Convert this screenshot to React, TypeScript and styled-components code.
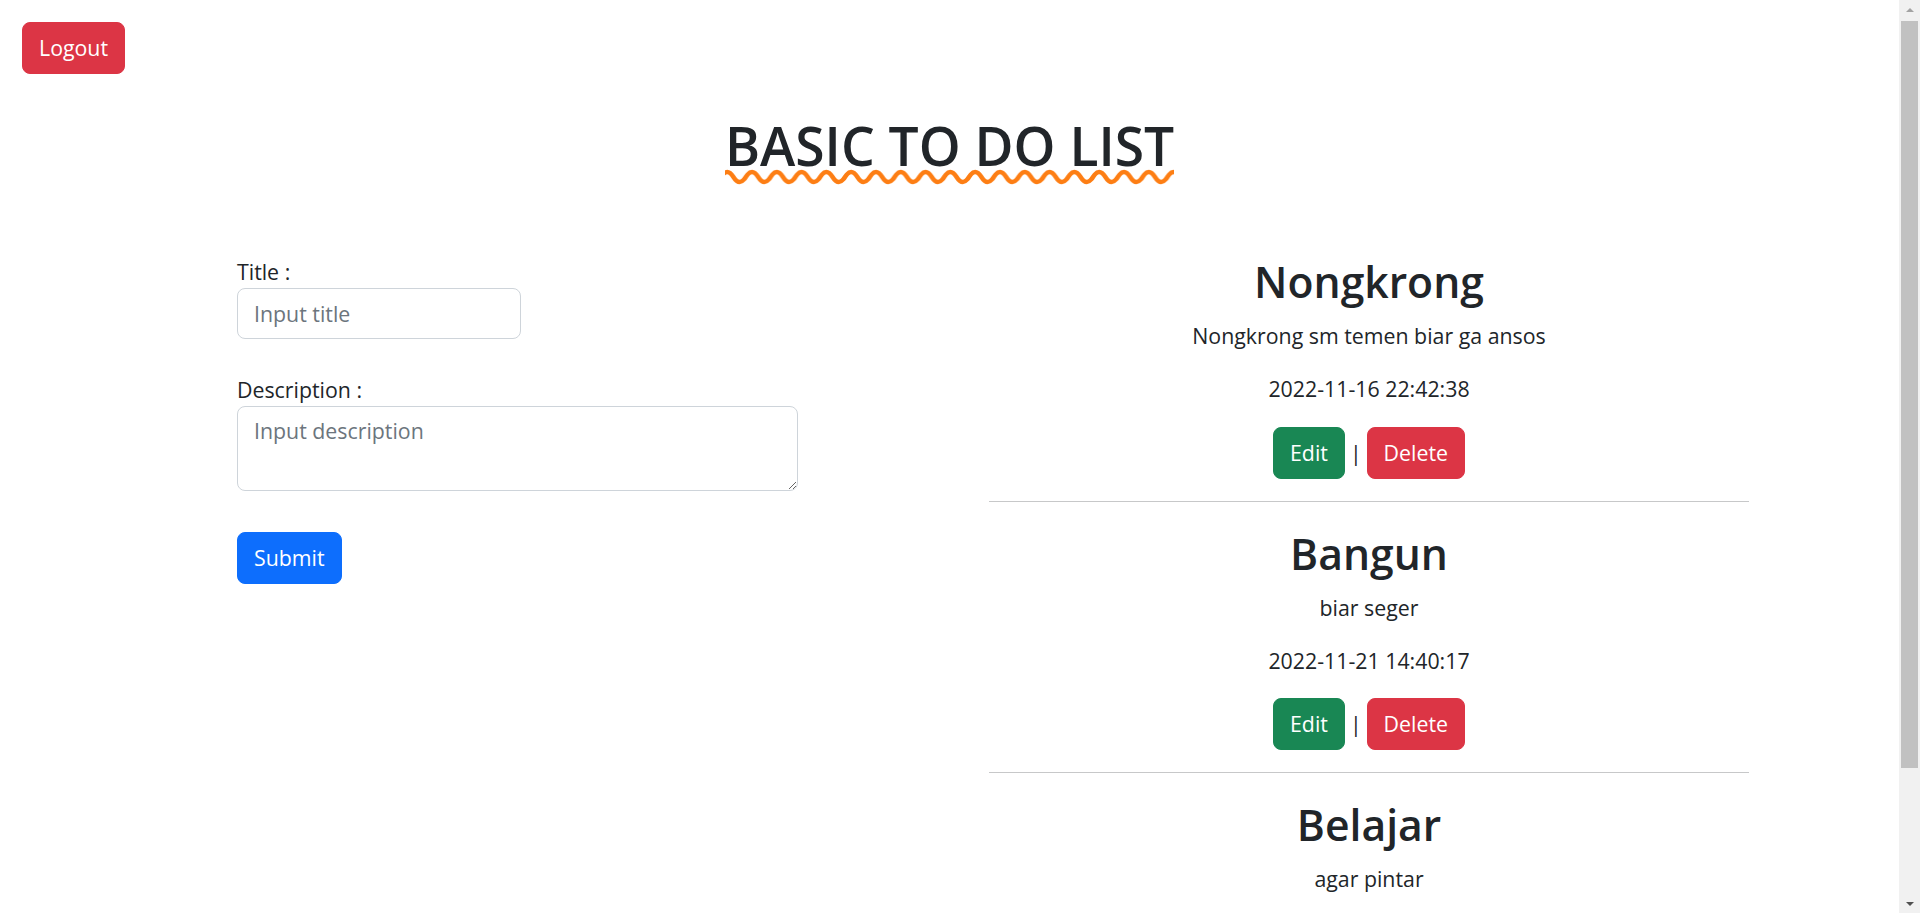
import styled, { createGlobalStyle } from 'styled-components';

interface Todo {
	title: string;
	description: string;
	createdAt: string;
}

const todos: Todo[] = [
	{ title: 'Nongkrong', description: 'Nongkrong sm temen biar ga ansos', createdAt: '2022-11-16 22:42:38' },
	{ title: 'Bangun', description: 'biar seger', createdAt: '2022-11-21 14:40:17' },
	{ title: 'Belajar', description: 'agar pintar', createdAt: '2022-11-22 09:12:05' },
];

const GlobalStyle = createGlobalStyle`
	* {
		box-sizing: border-box;
	}

	body {
		margin: 0;
		font-family: "Open Sans", "Noto Sans", sans-serif;
		font-size: 21.33px;
		line-height: 1.5;
		color: #212529;
		background: #fff;
		overflow: hidden;
	}
`;

// wave under the page title, one period per tile
const WAVE = 24.8;

function WaveLine() {
	return (
		<WaveSvg height="16" aria-hidden="true">
			<defs>
				<pattern id="wave" width={WAVE} height="16" patternUnits="userSpaceOnUse" x="-4">
					<path
						d={`M${-WAVE / 2} 8 Q${-WAVE / 4} 18 0 8 Q${WAVE / 4} -2 ${WAVE / 2} 8 Q${(WAVE * 3) / 4} 18 ${WAVE} 8 Q${(WAVE * 5) / 4} -2 ${(WAVE * 3) / 2} 8`}
						fill="none"
						stroke="#fd7e14"
						strokeWidth="4.5"
					/>
				</pattern>
			</defs>
			<rect width="100%" height="16" fill="url(#wave)" />
		</WaveSvg>
	);
}

export default function App() {
	return (
		<Page>
			<GlobalStyle />
			<Main>
				<TopBar>
					<Button variant="danger">Logout</Button>
				</TopBar>
				<Heading>
					<TitleWrap>
						<TitleText>BASIC TO DO LIST</TitleText>
						<WaveLine />
					</TitleWrap>
				</Heading>
				<Content>
					<Form onSubmit={(e) => e.preventDefault()}>
						<Label htmlFor="title">Title :</Label>
						<TitleInput id="title" placeholder="Input title" />
						<Label htmlFor="description" spaced>
							Description :
						</Label>
						<TextArea id="description" rows={2} placeholder="Input description" />
						<SubmitRow>
							<Button variant="primary" type="submit">
								Submit
							</Button>
						</SubmitRow>
					</Form>
					<List>
						{todos.map((todo) => (
							<Item key={todo.title}>
								<ItemTitle>{todo.title}</ItemTitle>
								<ItemText>{todo.description}</ItemText>
								<ItemText>{todo.createdAt}</ItemText>
								<Actions>
									<Button variant="success">Edit</Button>
									<Divider>|</Divider>
									<Button variant="danger">Delete</Button>
								</Actions>
								<Rule />
							</Item>
						))}
					</List>
				</Content>
			</Main>
			<Scrollbar aria-hidden="true">
				<ScrollArrow dir="up" />
				<ScrollTrack>
					<ScrollThumb />
				</ScrollTrack>
				<ScrollArrow dir="down" />
			</Scrollbar>
		</Page>
	);
}

const colors = {
	danger: '#dc3545',
	success: '#198754',
	primary: '#0d6efd',
};

const Page = styled.div`
	display: flex;
	height: 100vh;
	overflow: hidden;
`;

const Main = styled.div`
	flex: 1;
	min-width: 0;
	overflow: hidden;
`;

const Scrollbar = styled.div`
	display: flex;
	flex-direction: column;
	flex: none;
	width: 21px;
	background: #f1f1f1;
`;

const ScrollArrow = styled.div<{ dir: 'up' | 'down' }>`
	flex: none;
	height: 21px;
	display: flex;
	align-items: center;
	justify-content: center;

	&::before {
		content: '';
		border-left: 4px solid transparent;
		border-right: 4px solid transparent;
		${(p) =>
			p.dir === 'up'
				? 'border-bottom: 4px solid #a3a3a3; margin-top: -1px;'
				: 'border-top: 4px solid #505050; margin-top: 3px;'}
	}
`;

const ScrollTrack = styled.div`
	flex: 1;
	padding: 0 2px 0 2px;
`;

const ScrollThumb = styled.div`
	height: 747px;
	background: #c1c1c1;
`;

const TopBar = styled.div`
	padding: 22px 0 0 22px;
`;

const Button = styled.button<{ variant: keyof typeof colors }>`
	display: inline-block;
	height: 52px;
	padding: 0 16px;
	font-family: inherit;
	font-size: 21.33px;
	line-height: 32px;
	color: #fff;
	background: ${(p) => colors[p.variant]};
	border: 1px solid ${(p) => colors[p.variant]};
	border-radius: 8px;
	cursor: pointer;
`;

const Heading = styled.h1`
	margin: 40px 0 0;
	display: flex;
	justify-content: center;
	font-size: 53.33px;
	font-weight: 600;
	line-height: 64px;
`;

const TitleWrap = styled.span`
	display: inline-flex;
	flex-direction: column;
`;

const TitleText = styled.span`
	letter-spacing: 0;
`;

const WaveSvg = styled.svg`
	display: block;
	width: 100%;
	margin-top: -9px;
`;

const Content = styled.div`
	display: grid;
	grid-template-columns: 752px 760px;
	padding-left: 237px;
	margin-top: 71px;
`;

const Form = styled.form`
	display: flex;
	flex-direction: column;
	align-items: flex-start;
`;

const Label = styled.label<{ spaced?: boolean }>`
	display: block;
	line-height: 32px;
	margin-top: ${(p) => (p.spaced ? '35px' : '0')};
`;

const fieldStyle = `
	display: block;
	padding: 8px 16px;
	font-family: inherit;
	font-size: 21.33px;
	line-height: 32px;
	color: #212529;
	background: #fff;
	border: 1px solid #ced4da;
	border-radius: 8px;

	&::placeholder {
		color: #6c757d;
	}
`;

const TitleInput = styled.input`
	${fieldStyle};
	width: 284px;
	height: 51px;
`;

const TextArea = styled.textarea`
	${fieldStyle};
	width: 561px;
	height: 85px;
	resize: vertical;
`;

const SubmitRow = styled.div`
	margin-top: 41px;
`;

const List = styled.div`
	display: flex;
	flex-direction: column;
`;

const Item = styled.div`
	display: flex;
	flex-direction: column;
	align-items: center;
	text-align: center;
`;

const ItemTitle = styled.h2`
	margin: 0 0 12px;
	font-size: 42.67px;
	font-weight: 600;
	line-height: 52px;
`;

const ItemText = styled.p`
	margin: 0 0 21.33px;
	line-height: 32px;
`;

const Actions = styled.div`
	display: flex;
	align-items: center;
	gap: 5px;
`;

const Divider = styled.span`
	line-height: 32px;
`;

const Rule = styled.hr`
	align-self: stretch;
	margin: 22px 0 26px;
	border: 0;
	border-top: 1.33px solid rgba(33, 37, 41, 0.25);
`;
